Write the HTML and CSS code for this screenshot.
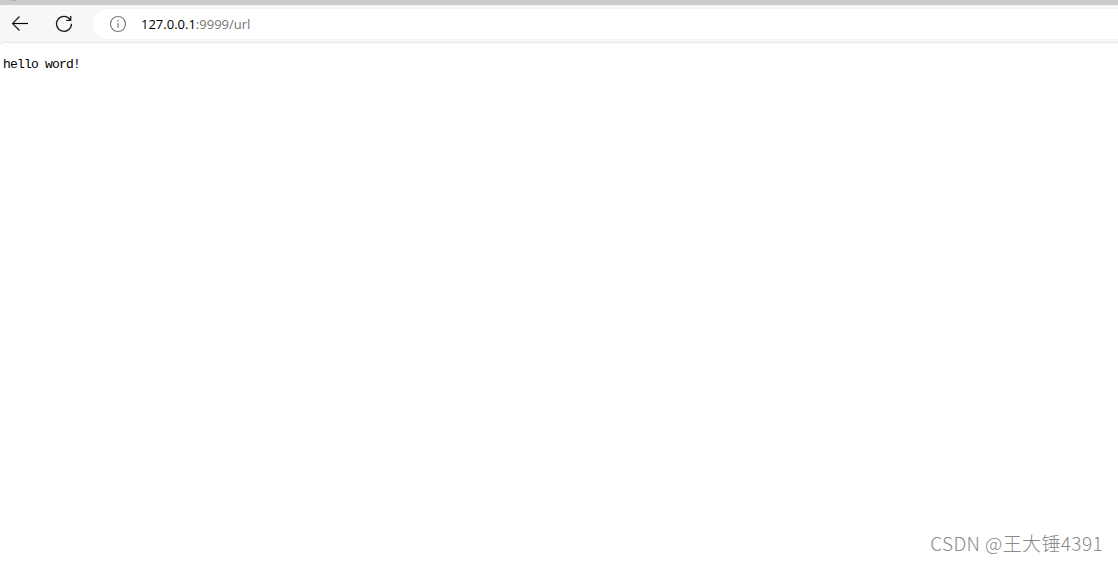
FILE: index.html
```
<!DOCTYPE html>
<html lang="zh-CN">
<head>
    <meta charset="UTF-8">
    <meta name="viewport" content="width=device-width, initial-scale=1.0">
    <title>127.0.0.1:9999/url</title>
    <link rel="stylesheet" href="styles.css">
</head>
<body>
    <div class="tab-strip"><div class="tab-mark"></div></div>
    <header class="toolbar">
        <svg class="icon back" width="20" height="20" viewBox="0 0 20 20">
            <path class="shaft" d="M18 9.5H3"/>
            <path d="M9.5 2.5L2.5 9.5L9.5 16.5"/>
        </svg>
        <svg class="icon reload" width="20" height="20" viewBox="0 0 20 20">
            <path d="M16.2 5.6A7.5 7.5 0 1 0 17.5 9.8M16.7 2V6.3H12.4"/>
        </svg>
        <div class="address-bar">
            <svg class="info" width="18" height="18" viewBox="0 0 18 18">
                <circle cx="9" cy="9" r="7.5"/>
                <path d="M9 8V13M9 5V6.5"/>
            </svg>
            <div class="url"><span class="host">127.0.0.1</span>:9999/url</div>
        </div>
    </header>

    <main class="page">
        <pre class="response">hello word!</pre>
        <div class="watermark">CSDN @王大锤4391</div>
    </main>
</body>
</html>
```

FILE: styles.css
```
body {
    margin: 0;
    height: 562px;
    display: flex;
    flex-direction: column;
    background-color: #f7f7f7;
    overflow: hidden;
}

.tab-strip {
    height: 5px;
    background-color: #cbcbcb;
}

.tab-mark {
    width: 5px;
    height: 1px;
    margin-left: 11px;
    background-color: #b2b2b2;
}

.toolbar {
    height: 37px;
    display: flex;
    align-items: center;
    padding-left: 10px;
    background-color: #f7f7f7;
}

.icon {
    fill: none;
    stroke: #1b1b1b;
    stroke-width: 1.2;
}

.shaft {
    stroke: #000;
}

.reload {
    margin-left: 24px;
    stroke-width: 1.3;
}

.address-bar {
    flex: 1;
    height: 30px;
    display: flex;
    align-items: center;
    box-sizing: border-box;
    margin-left: 18px;
    padding-left: 17px;
    background-color: #fff;
    border-radius: 15px 0 0 15px;
    box-shadow: 0 0 2px rgba(0, 0, 0, 0.06);
}

.info {
    fill: none;
    stroke: #7c7c7c;
    stroke-width: 1.2;
}

.url {
    margin-left: 14px;
    font-family: "Open Sans", "Noto Sans", sans-serif;
    font-size: 13px;
    color: #767676;
}

.host {
    color: #000;
}

.page {
    flex: 1;
    display: flex;
    flex-direction: column;
    justify-content: space-between;
    border-top: 1px solid #e8e8e8;
    border-top-left-radius: 5px;
    background-color: #fff;
}

.response {
    margin: 14px 0 0 3px;
    font-family: "Liberation Mono", monospace;
    font-size: 13px;
    line-height: 16px;
    letter-spacing: -0.8px;
    color: #000;
}

.watermark {
    align-self: flex-end;
    margin: 0 15px 6px 0;
    font-family: "Noto Sans CJK SC", sans-serif;
    font-size: 19px;
    font-weight: 300;
    line-height: 26px;
    letter-spacing: 0.38px;
    color: #8a8a8a;
}
```
